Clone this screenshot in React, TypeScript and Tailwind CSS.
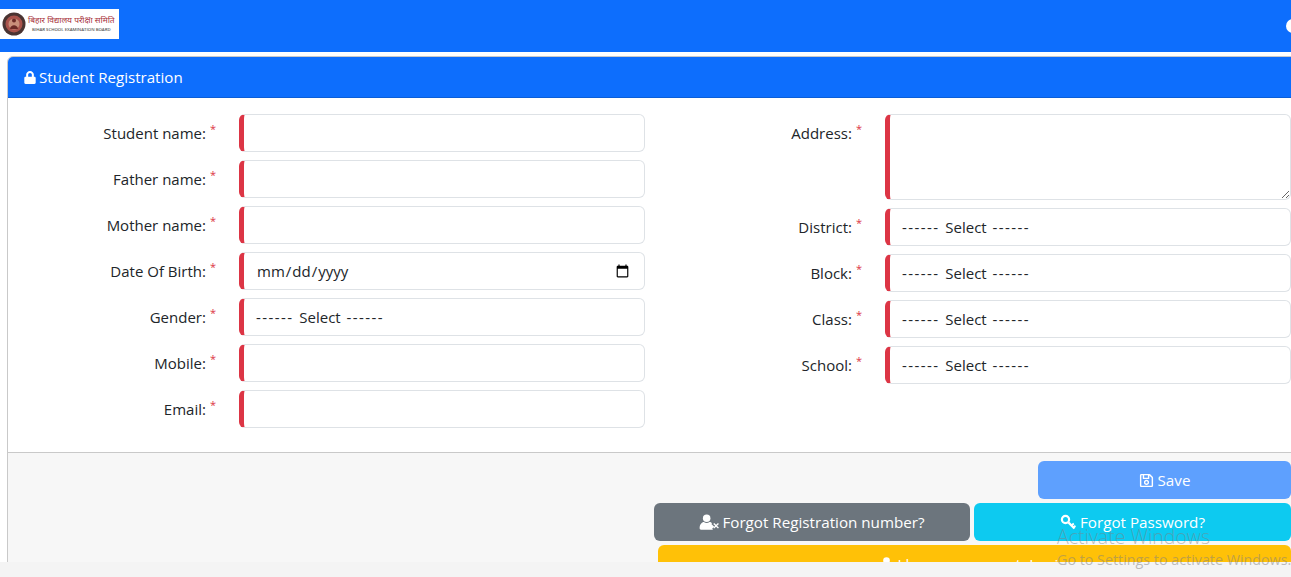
import { FaLock, FaRegSave } from "react-icons/fa";

const font = "font-['Open_Sans',sans-serif]";
const inputCls =
  "h-[38px] w-[406px] shrink-0 rounded-[6px] border border-[#dee2e6] border-l-[5px] border-l-[#dc3545] bg-white pl-3 pr-3 text-[15px] text-[#212529] outline-none appearance-none " + font;

function Row({ label, children }: { label: string; children: React.ReactNode }) {
  return (
    <div className="flex items-start">
      <label className="flex h-[38px] w-[208px] shrink-0 items-center justify-end text-[15px] text-[#212529]">
        <span>{label}:</span>
        <span className="mb-[10px] ml-[4px] text-[11px] leading-none text-[#dc3545]">*</span>
      </label>
      <div className="ml-[23px]">{children}</div>
    </div>
  );
}

function Sel() {
  return (
    <div role="combobox" className={inputCls + " flex items-center whitespace-pre"}>
      <span className="tracking-[1.4px]">------</span>
      <span className="px-[2px]"> Select </span>
      <span className="tracking-[1.4px]">------</span>
    </div>
  );
}

function UserX() {
  return (
    <svg viewBox="0 0 22 17" className="h-[16px] w-[21px] shrink-0" fill="currentColor">
      <circle cx="8" cy="4.5" r="4" />
      <path d="M0.5 15c0-4 2.5-6.5 4.5-6.5 1 .7 2 1 3 1s2-.3 3-1c1 0 2 .5 2.700 1.300l-.7.7 3 3-2.200 2.200 1 1H2c-1 0-1.500-.7-1.500-1.700z" />
      <path d="M15 10.500l1-1 2 2 2-2 1 1-2 2 2 2-1 1-2-2-2 2-1-1 2-2z" />
    </svg>
  );
}

function KeyIcon() {
  return (
    <svg viewBox="0 0 16 16" className="h-[16px] w-[16px] shrink-0" fill="none" stroke="currentColor">
      <circle cx="5.500" cy="5.500" r="3.600" strokeWidth="2.200" />
      <path d="M8.500 8.500L14.500 14.500" strokeWidth="2.400" />
      <path d="M11.500 11.500L13.800 9.500M13.500 13.500L15.500 11.800" strokeWidth="1.800" />
    </svg>
  );
}

export default function App() {
  return (
    <div className={"relative flex h-[577px] w-[1291px] flex-col overflow-hidden bg-white " + font}>
      <header className="flex h-[52px] shrink-0 items-center justify-between bg-[#0d6efd]">
        <div className="mb-[5px] flex h-[30px] w-[119px] items-center gap-[2px] bg-white pl-[2px]">
          <svg viewBox="0 0 24 24" className="h-[24px] w-[24px] shrink-0">
            <circle cx="12" cy="12" r="11.500" fill="#4a3432" />
            <circle cx="12" cy="12" r="8.500" fill="#a9534c" />
            <circle cx="12" cy="12" r="5.500" fill="#c98f7a" />
            <circle cx="12" cy="8.500" r="2" fill="#6b2a26" />
            <path d="M8 17c.5-5 7.500-5 8 0z" fill="#6b2a26" />
          </svg>
          <div className="flex flex-col items-center leading-none">
            <span className="font-['Noto_Sans',sans-serif] text-[8.400px] whitespace-nowrap text-[#a8323a]">बिहार विद्यालय परीक्षा समिति</span>
            <span className="mt-[3px] text-[4.300px] font-semibold whitespace-nowrap text-[#555]">BIHAR SCHOOL EXAMINATION BOARD</span>
          </div>
        </div>
        <div className="mr-[-9px] h-[14px] w-[14px] shrink-0 rounded-full bg-white" />
      </header>

      <main className="mt-[4px] min-h-0 flex-1 overflow-hidden pl-[7px]">
        <div className="w-[1320px] rounded-t-[6px] border border-[#c9c9c9]">
          <div className="flex h-[41px] items-center gap-[3px] rounded-t-[5px] border-b border-b-[#0b5ed7] bg-[#0d6efd] pl-[16px] text-[15.100px] text-white">
            <FaLock className="h-[13px] w-[12px]" />
            <span>Student Registration</span>
          </div>

          <div className="flex h-[355px] border-b border-b-[#c9c9c9] bg-white pt-[16px]">
            <div className="flex w-[646px] shrink-0 flex-col gap-2">
              <Row label="Student name"><input className={inputCls} /></Row>
              <Row label="Father name"><input className={inputCls} /></Row>
              <Row label="Mother name"><input className={inputCls} /></Row>
              <Row label="Date Of Birth"><input type="date" className={inputCls} /></Row>
              <Row label="Gender"><Sel /></Row>
              <Row label="Mobile"><input className={inputCls} /></Row>
              <Row label="Email"><input className={inputCls} /></Row>
            </div>
            <div className="flex w-[646px] shrink-0 flex-col gap-2">
              <Row label="Address"><textarea className={inputCls + " !h-[86px] block pt-1"} /></Row>
              <Row label="District"><Sel /></Row>
              <Row label="Block"><Sel /></Row>
              <Row label="Class"><Sel /></Row>
              <Row label="School"><Sel /></Row>
            </div>
          </div>

          <div className="flex flex-col gap-1 bg-[#f7f7f7] pt-2 pb-4 text-[15.200px] text-white">
            <div className="ml-[1030px] flex h-[38px] w-[253px] shrink-0 items-center justify-center gap-[4px] rounded-[6px] bg-[#5ea0fe]">
              <FaRegSave className="h-[15px] w-[15px]" />
              <span>Save</span>
            </div>
            <div className="ml-[646px] flex shrink-0 gap-1">
              <div className="flex h-[38px] w-[316px] items-center justify-center gap-[2px] rounded-[6px] bg-[#6c757d]">
                <UserX />
                <span>Forgot Registration number?</span>
              </div>
              <div className="flex h-[38px] w-[317px] items-center justify-center gap-[4px] rounded-[6px] bg-[#0dcaf0]">
                <KeyIcon />
                <span>Forgot Password?</span>
              </div>
            </div>
            <div className="ml-[650px] flex h-[38px] w-[633px] shrink-0 items-center justify-center gap-[5px] rounded-[6px] bg-[#ffc107]">
              <svg viewBox="0 0 12 16" className="h-[14px] w-[11px] shrink-0" fill="currentColor">
                <circle cx="6" cy="4" r="3.800" />
                <path d="M0 15c0-4 2-6 3.500-6 1.500 1 3.500 1 5 0C10 9 12 11 12 15c0 .6-.5 1-1 1H1c-.5 0-1-.4-1-1z" />
              </svg>
              <span>I have an account, Login</span>
            </div>
          </div>
        </div>
      </main>

      <div className="h-[15px] shrink-0 bg-[#f4f4f4]" />

      <div className="pointer-events-none absolute top-[525px] left-[1057px] whitespace-nowrap text-[#808080]/50">
        <div className="text-[19.500px] leading-[24px] font-light">Activate Windows</div>
        <div className="mt-[1px] text-[14.300px] leading-[20px]">Go to Settings to activate Windows.</div>
      </div>
    </div>
  );
}
